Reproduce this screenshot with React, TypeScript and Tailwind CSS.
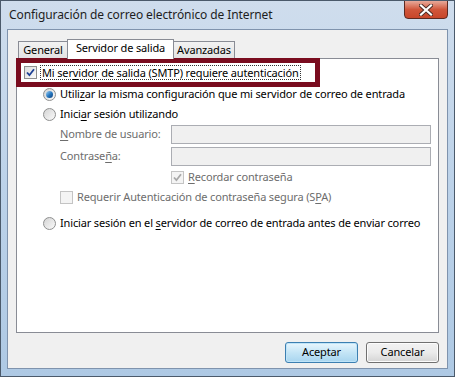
import React from 'react';

const font = { fontFamily: '"Noto Sans", "Liberation Sans", sans-serif' };

const Checkbox = ({ checked = false, disabled = false }: { checked?: boolean; disabled?: boolean }) => (
  <span
    className={`relative inline-block w-[13px] h-[13px] shrink-0 border ${
      disabled ? 'border-[#c4c4c4] bg-[#f4f4f4]' : 'border-[#8e8f8f] bg-gradient-to-br from-[#dcdcdc] to-[#fbfbfb]'
    }`}
  >
    {checked && (
      <svg viewBox="0 0 11 11" className="absolute left-0 top-0 w-[11px] h-[11px]">
        <path
          d="M2 5.5 L4.4 8.2 L9 2.2"
          fill="none"
          stroke={disabled ? '#a8a8a8' : '#1c3f94'}
          strokeWidth="1.8"
        />
      </svg>
    )}
  </span>
);

const Radio = ({ checked = false }: { checked?: boolean }) => (
  <span className="relative inline-flex items-center justify-center w-[13px] h-[13px] shrink-0 rounded-full border border-[#8e8f8f] bg-gradient-to-br from-[#d4d4d4] to-[#fafafa]">
    {checked && (
      <span className="w-[7px] h-[7px] rounded-full bg-gradient-to-br from-[#a6d7f4] via-[#2a7cc4] to-[#0c3f7c]" />
    )}
  </span>
);

const U = ({ children }: { children: React.ReactNode }) => <span className="underline underline-offset-2">{children}</span>;

export default function App() {
  return (
    <div
      className="w-[455px] h-[377px] relative overflow-hidden flex flex-col bg-gradient-to-b from-[#cfdded] via-[#bcd2e9] to-[#aec9e4] border border-[#4b5a6b] text-[11px] tracking-[-0.15px] text-black whitespace-nowrap"
      style={font}
    >
      {/* title bar */}
      <div className="h-[28px] shrink-0 flex items-center pl-[8px] relative">
        <span className="text-[12px] text-[#1e1e1e] tracking-[-0.1px]">Configuración de correo electrónico de Internet</span>
        <div className="absolute right-[6px] top-[-1px] w-[44px] h-[19px] rounded-b-[4px] border border-[#5c2a22] bg-gradient-to-b from-[#e7a99a] via-[#d0563b] to-[#c8462a] flex items-center justify-center">
          <svg viewBox="0 0 14 12" className="w-[14px] h-[12px]">
            <path d="M2 1.5 L12 10.5 M12 1.5 L2 10.5" stroke="#4a2a24" strokeWidth="4" strokeLinecap="square" />
            <path d="M2 1.5 L12 10.5 M12 1.5 L2 10.5" stroke="#ffffff" strokeWidth="2.2" strokeLinecap="square" />
          </svg>
        </div>
      </div>

      {/* client area */}
      <div className="flex-1 mx-[6px] mb-[7px] border border-[#7f93ad] bg-[#f0f0f0] flex flex-col pl-[8px] pr-[8px] pt-[8px]">
        {/* tabs */}
        <div className="flex items-end h-[20px] pl-[2px] relative z-10">
          <div className="w-[50px] h-[17px] pt-[1px] flex items-center justify-center border border-[#898c95] border-b-0 bg-gradient-to-b from-[#f2f2f2] to-[#e3e3e3]">
            General
          </div>
          <div className="w-[107px] h-[20px] pb-[3px] flex items-center justify-center border border-[#898c95] border-b-0 bg-white -mb-px mx-[-1px]">
            Servidor de salida
          </div>
          <div className="w-[62px] h-[17px] pt-[1px] flex items-center justify-center border border-[#898c95] border-b-0 bg-gradient-to-b from-[#f2f2f2] to-[#e3e3e3]">
            Avanzadas
          </div>
        </div>

        {/* tab panel */}
        <div className="h-[275px] border border-[#898c95] bg-white relative flex flex-col">
          {/* highlighted row */}
          <div className="ml-[-1px] mt-[-1px] w-[304px] h-[29px] border-[5px] border-[#7a0c1f] flex items-center pl-[3px]">
            <Checkbox checked />
            <span className="ml-[3px] px-[1px] leading-[13px] border border-dotted border-[#333]">
              Mi ser<U>v</U>idor de salida (SMTP) requiere autenticación
            </span>
          </div>

          <div className="flex flex-col pl-[26px] mt-[-3px]">
            <div className="h-[20px] flex items-center gap-[4px]">
              <Radio checked />
              <span>
                Utili<U>z</U>ar la misma configuración que mi servidor de correo de entrada
              </span>
            </div>
            <div className="h-[20px] flex items-center gap-[4px]">
              <Radio />
              <span>
                Inici<U>a</U>r sesión utilizando
              </span>
            </div>
          </div>

          <div className="flex flex-col pl-[43px] pr-[7px] text-[#6d6d6d]">
            <div className="h-[20px] flex items-center">
              <span className="w-[111px]">
                <U>N</U>ombre de usuario:
              </span>
              <div className="flex-1 h-[19px] border border-[#abadb3] bg-[#f0f0f0]" />
            </div>
            <div className="h-[20px] flex items-center mt-[2px]">
              <span className="w-[111px]">
                Contrase<U>ñ</U>a:
              </span>
              <div className="flex-1 h-[19px] border border-[#abadb3] bg-[#f0f0f0]" />
            </div>
            <div className="h-[20px] flex items-center pl-[111px] gap-[4px] mt-[1px]">
              <Checkbox checked disabled />
              <span>
                <U>R</U>ecordar contraseña
              </span>
            </div>
            <div className="h-[20px] flex items-center gap-[4px]">
              <Checkbox disabled />
              <span>
                Requerir Autenticación de contraseña segura (S<U>P</U>A)
              </span>
            </div>
          </div>

          <div className="flex flex-col pl-[26px] mt-[6px]">
            <div className="h-[20px] flex items-center gap-[4px]">
              <Radio />
              <span>
                Iniciar sesión en el <U>s</U>ervidor de correo de entrada antes de enviar correo
              </span>
            </div>
          </div>
        </div>

        {/* buttons */}
        <div className="flex justify-end gap-[8px] pt-[9px]">
          <button className="w-[73px] h-[21px] rounded-[3px] border border-[#3c7fb1] bg-gradient-to-b from-[#e9f6fd] via-[#c4e5f6] to-[#a8d5ef] shadow-[inset_0_0_0_1px_#bfe4f8]">
            Aceptar
          </button>
          <button className="w-[73px] h-[21px] rounded-[3px] border border-[#707070] bg-gradient-to-b from-[#f2f2f2] via-[#ebebeb] to-[#d4d4d4] shadow-[inset_0_0_0_1px_#fcfcfc]">
            Cancelar
          </button>
        </div>
      </div>
    </div>
  );
}
